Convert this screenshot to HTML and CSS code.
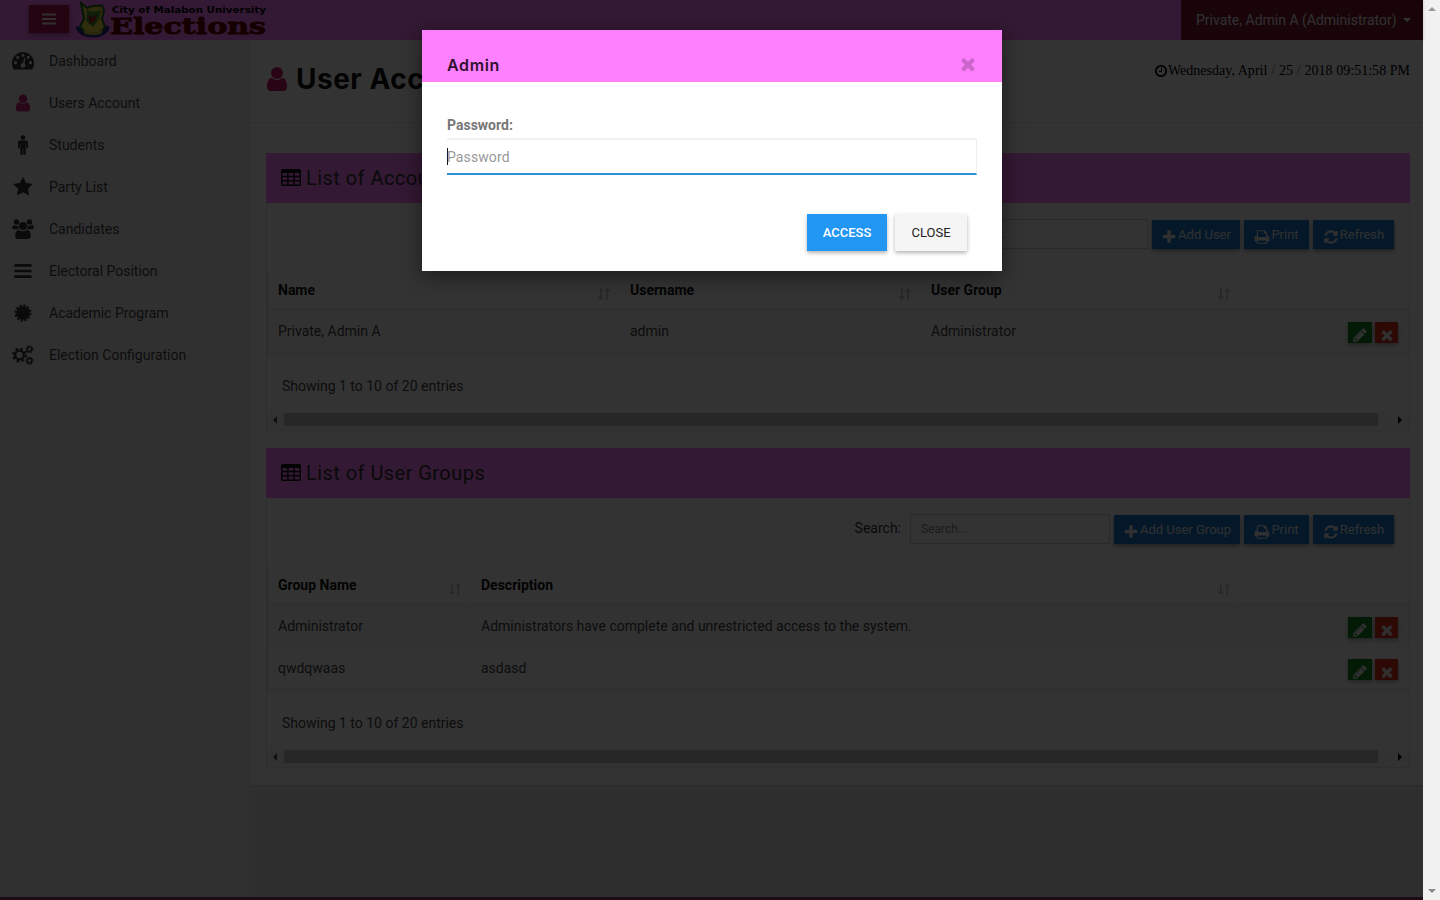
FILE: index.html
```
<!DOCTYPE html>
<html lang="en">
<head>
<meta charset="utf-8">
<title>User Accounts</title>
<link rel="stylesheet" href="styles.css">
</head>
<body>
<svg class="defs" aria-hidden="true">
  <symbol id="bars" viewBox="0 0 1792 1792"><path d="M128 270h1536v240H128zM128 776h1536v240H128zM128 1282h1536v240H128z"/></symbol>
  <symbol id="user" viewBox="0 0 1792 1792"><path d="M1536 1399q0 109-62.500 187t-150.500 78h-854q-88 0-150.500-78t-62.500-187q0-85 8.500-160.500t31.500-152 58.500-131 94-89 134.500-34.500q131 128 313 128t313-128q76 0 134.500 34.500t94 89 58.500 131 31.500 152 8.500 160.500zm-256-887q0 159-112.500 271.500t-271.500 112.500-271.500-112.500-112.500-271.500 112.500-271.500 271.500-112.500 271.500 112.500 112.500 271.500z"/></symbol>
  <symbol id="star" viewBox="0 0 1792 1792"><path d="M1728 647q0 22-26 48l-363 354 86 500q1 7 1 20 0 21-10.500 35.500t-30.500 14.500q-19 0-40-12l-449-236-449 236q-22 12-40 12-21 0-31.500-14.500t-10.500-35.500q0-6 2-20l86-500-364-354q-25-27-25-48 0-37 56-46l502-73 225-455q19-41 49-41t49 41l225 455 502 73q56 9 56 46z"/></symbol>
  <symbol id="plus" viewBox="0 0 1792 1792"><path d="M1600 736v192q0 40-28 68t-68 28h-416v416q0 40-28 68t-68 28h-192q-40 0-68-28t-28-68v-416h-416q-40 0-68-28t-28-68v-192q0-40 28-68t68-28h416v-416q0-40 28-68t68-28h192q40 0 68 28t28 68v416h416q40 0 68 28t28 68z"/></symbol>
  <symbol id="times" viewBox="0 0 1792 1792"><path d="M1490 1322q0 40-28 68l-136 136q-28 28-68 28t-68-28l-294-294-294 294q-28 28-68 28t-68-28l-136-136q-28-28-28-68t28-68l294-294-294-294q-28-28-28-68t28-68l136-136q28-28 68-28t68 28l294 294 294-294q28-28 68-28t68 28l136 136q28 28 28 68t-28 68l-294 294 294 294q28 28 28 68z"/></symbol>
  <symbol id="pencil" viewBox="0 0 1792 1792"><path d="M491 1536l91-91-235-235-91 91v107h128v128h107zm523-928q0-22-22-22-10 0-17 7l-542 542q-7 7-7 17 0 22 22 22 10 0 17-7l542-542q7-7 7-17zm-54-192l416 416-832 832h-416v-416zm683 96q0 53-37 90l-166 166-416-416 166-165q36-38 90-38 53 0 91 38l235 234q37 39 37 91z"/></symbol>
  <symbol id="refresh" viewBox="0 0 1792 1792"><path d="M1639 1056q0 5-1 7-64 268-268 434.500t-478 166.500q-146 0-282.500-55t-243.500-157l-129 129q-19 19-45 19t-45-19-19-45v-448q0-26 19-45t45-19h448q26 0 45 19t19 45-19 45l-137 137q71 66 161 102t187 36q134 0 250-65t186-179q11-17 53-117 8-23 30-23h192q13 0 22.500 9.500t9.500 22.500zm25-800v448q0 26-19 45t-45 19h-448q-26 0-45-19t-19-45 19-45l138-138q-148-137-349-137-134 0-250 65t-186 179q-11 17-53 117-8 23-30 23h-199q-13 0-22.500-9.500t-9.500-22.500v-7q65-268 270-434.500t480-166.500q146 0 284 55.500t245 156.500l130-129q19-19 45-19t45 19 19 45z"/></symbol>
  <symbol id="print" viewBox="0 0 1792 1792"><path d="M448 1536h896v-256h-896v256zm0-640h896v-384h-160q-40 0-68-28t-28-68v-160h-640v640zm1152 64q0-26-19-45t-45-19-45 19-19 45 19 45 45 19 45-19 19-45zm128 0v416q0 13-9.500 22.500t-22.500 9.500h-224v160q0 40-28 68t-68 28h-960q-40 0-68-28t-28-68v-160h-224q-13 0-22.500-9.500t-9.500-22.500v-416q0-79 56.500-135.500t135.500-56.500h64v-544q0-40 28-68t68-28h672q40 0 88 20t76 48l152 152q28 28 48 76t20 88v256h64q79 0 135.500 56.500t56.500 135.500z"/></symbol>
  <symbol id="clock" viewBox="0 0 1792 1792"><path d="M1024 544v448q0 14-9 23t-23 9h-320q-14 0-23-9t-9-23v-64q0-14 9-23t23-9h224v-352q0-14 9-23t23-9h64q14 0 23 9t9 23zm416 352q0-148-73-273t-198-198-273-73-273 73-198 198-73 273 73 273 198 198 273 73 273-73 198-198 73-273zm224 0q0 209-103 385.500t-279.500 279.500-385.500 103-385.500-103-279.500-279.500-103-385.500 103-385.500 279.500-279.500 385.500-103 385.500 103 279.500 279.500 103 385.500z"/></symbol>
  <symbol id="table" viewBox="0 0 20 18"><path fill-rule="evenodd" d="M1.500 0h17Q20 0 20 1.500v14q0 1.500-1.500 1.500h-17Q0 17 0 15.500v-14Q0 0 1.500 0zM1.500 4v2.800h4.700V4zm6.100 0v2.800h4.800V4zm6.200 0v2.800h4.700V4zM1.500 8.300V11h4.700V8.300zm6.100 0V11h4.800V8.300zm6.200 0V11h4.700V8.300zM1.500 12.500v3h4.700v-3zm6.100 0v3h4.800v-3zm6.200 0v3h4.700v-3z"/></symbol>
  <symbol id="dashboard" viewBox="0 0 20 18"><path fill-rule="evenodd" d="M10 1a10 10 0 0 1 8.600 15.200q-.3.500-.9.500H2.300q-.6 0-.9-.5A10 10 0 0 1 10 1zM4.600 10.500a1.400 1.400 0 1 0-2.800 0 1.400 1.400 0 0 0 2.800 0zm2-4.800a1.400 1.400 0 1 0-2.800 0 1.400 1.400 0 0 0 2.800 0zm4.800-2a1.400 1.400 0 1 0-2.800 0 1.400 1.400 0 0 0 2.800 0zm4.800 2a1.400 1.400 0 1 0-2.800 0 1.400 1.400 0 0 0 2.800 0zm2 4.800a1.400 1.400 0 1 0-2.800 0 1.400 1.400 0 0 0 2.800 0zM12.300 6.500l-1.200-.3-1.100 4.600a2.200 2.200 0 1 0 1.300.4z"/></symbol>
  <symbol id="male" viewBox="0 0 14 20"><circle cx="7" cy="2.600" r="2.400"/><path d="M4 5.500h6q2 0 2 2v5q0 1-.9 1t-.9-1V8.700h-.5v10q0 1.200-1.200 1.200-1.200 0-1.200-1.200v-5h-.6v5q0 1.200-1.200 1.200-1.200 0-1.200-1.200v-10h-.5v3.800q0 1-.9 1t-.9-1v-5q0-2 2-2z"/></symbol>
  <symbol id="group" viewBox="0 0 22 20"><circle cx="4.500" cy="3" r="2.700"/><circle cx="17.500" cy="3" r="2.700"/><circle cx="11" cy="7" r="4"/><path d="M2 6q2.500 1.400 4.500.6Q6 9 7.200 10.300H3Q.2 10.300.2 8.400.2 6 2 6zM20 6q-2.500 1.400-4.500.6.5 2.400-.7 3.700H19q2.800 0 2.800-1.900Q21.800 6 20 6zM7 11q4 2.600 8 0 3.800 0 3.800 6 0 2.900-2.800 2.900H6q-2.800 0-2.800-2.900Q3.200 11 7 11z"/></symbol>
  <symbol id="certificate" viewBox="0 0 20 20"><circle cx="10" cy="10" r="7.600"/><circle cx="10" cy="10" r="8.300" fill="none" stroke="currentColor" stroke-width="2.400" stroke-dasharray="2.550 1.795"/></symbol>
  <symbol id="cogs" viewBox="0 0 22 20"><g fill="none" stroke="currentColor"><circle cx="7.500" cy="10" r="4.300" stroke-width="2.300"/><circle cx="7.500" cy="10" r="6.300" stroke-width="2.200" stroke-dasharray="2.600 2.350"/><circle cx="17.500" cy="4.200" r="2.200" stroke-width="1.500"/><circle cx="17.500" cy="4.200" r="3.500" stroke-width="1.200" stroke-dasharray="1.500 1.250"/><circle cx="17.500" cy="15.800" r="2.200" stroke-width="1.500"/><circle cx="17.500" cy="15.800" r="3.500" stroke-width="1.200" stroke-dasharray="1.500 1.250"/></g></symbol>
  <symbol id="sort" viewBox="0 0 14 12"><path d="M3 0h1.500v8.500H7L3.700 12 .5 8.500H3zM9.500 12H11V3.500h2.500L10.200 0 7 3.500h2.500z"/></symbol>
</svg>
<div class="screen">
  <div class="app">
    <header class="topbar">
      <button class="menu-btn"><svg class="i16"><use href="#bars"/></svg></button>
      <svg class="logo" viewBox="0 0 194 38">
        <path d="M1 25q14 7 31-.500l3 2q-4 10-17 10T1 28z" fill="#26238f"/>
        <path d="M6 2l6 5 6-2 9-.500 2 5-2 8 3 9-6 6H11l-6-7 4-8z" fill="#e6dc3c" stroke="#176b20" stroke-width="2"/>
        <path d="M12 9l7 2 7-2-2 9-6 8-7-6z" fill="#579c35"/>
        <path d="M13 14l5 2 4-2-2 6-5 3z" fill="#9a281e"/>
        <path d="M10 22l6 5 10-4 1 4-6 3h-9z" fill="#f0e040"/>
        <path d="M8 29q10 5 20 0l-2 4q-8 2-16 0z" fill="#d9c544"/>
        <text class="logo-top" x="37" y="12" textLength="154" lengthAdjust="spacingAndGlyphs">City of Malabon University</text>
        <text class="logo-main" x="35" y="32.500" textLength="156" lengthAdjust="spacingAndGlyphs">Elections</text>
      </svg>
      <div class="account">Private, Admin A (Administrator)<span class="caret"></span></div>
    </header>
    <div class="body">
      <nav class="sidebar">
        <a class="item"><svg class="mi"><use href="#dashboard"/></svg>Dashboard</a>
        <a class="item active"><svg class="mi"><use href="#user"/></svg>Users Account</a>
        <a class="item"><svg class="mi"><use href="#male"/></svg>Students</a>
        <a class="item"><svg class="mi"><use href="#star"/></svg>Party List</a>
        <a class="item"><svg class="mi"><use href="#group"/></svg>Candidates</a>
        <a class="item"><svg class="mi"><use href="#bars"/></svg>Electoral Position</a>
        <a class="item"><svg class="mi small"><use href="#certificate"/></svg>Academic Program</a>
        <a class="item"><svg class="mi"><use href="#cogs"/></svg>Election Configuration</a>
      </nav>
      <main class="content">
        <div class="page">
          <div class="page-head">
            <h1><svg class="head-icon"><use href="#user"/></svg>User Accounts</h1>
            <div class="clock"><svg class="i14"><use href="#clock"/></svg><span>Wednesday, April</span><span class="slash">/</span><span>25</span><span class="slash">/</span><span>2018 09:51:58 PM</span></div>
          </div>
          <section class="card">
            <h2><svg class="tbl"><use href="#table"/></svg>List of Accounts</h2>
            <div class="tools">
              <label>Search:</label><input placeholder="Search...">
              <button class="btn add-user"><svg class="i16"><use href="#plus"/></svg>Add User</button>
              <button class="btn print"><svg class="i16"><use href="#print"/></svg>Print</button>
              <button class="btn refresh"><svg class="i16"><use href="#refresh"/></svg>Refresh</button>
            </div>
            <div class="grid users">
              <div class="row th"><div>Name<svg class="sort"><use href="#sort"/></svg></div><div>Username<svg class="sort"><use href="#sort"/></svg></div><div>User Group<svg class="sort"><use href="#sort"/></svg></div><div></div></div>
              <div class="row odd"><div>Private, Admin A</div><div>admin</div><div>Administrator</div><div class="acts"><b class="ed"><svg class="i16"><use href="#pencil"/></svg></b><b class="del"><svg class="i16"><use href="#times"/></svg></b></div></div>
            </div>
            <div class="info">Showing 1 to 10 of 20 entries</div>
            <div class="hscroll"><i class="l"></i><span></span><i class="r"></i></div>
          </section>
          <section class="card">
            <h2><svg class="tbl"><use href="#table"/></svg>List of User Groups</h2>
            <div class="tools">
              <label>Search:</label><input placeholder="Search...">
              <button class="btn add-group"><svg class="i16"><use href="#plus"/></svg>Add User Group</button>
              <button class="btn print"><svg class="i16"><use href="#print"/></svg>Print</button>
              <button class="btn refresh"><svg class="i16"><use href="#refresh"/></svg>Refresh</button>
            </div>
            <div class="grid groups">
              <div class="row th"><div>Group Name<svg class="sort"><use href="#sort"/></svg></div><div>Description<svg class="sort"><use href="#sort"/></svg></div><div></div></div>
              <div class="row odd"><div>Administrator</div><div>Administrators have complete and unrestricted access to the system.</div><div class="acts"><b class="ed"><svg class="i16"><use href="#pencil"/></svg></b><b class="del"><svg class="i16"><use href="#times"/></svg></b></div></div>
              <div class="row"><div>qwdqwaas</div><div>asdasd</div><div class="acts"><b class="ed"><svg class="i16"><use href="#pencil"/></svg></b><b class="del"><svg class="i16"><use href="#times"/></svg></b></div></div>
            </div>
            <div class="info tall">Showing 1 to 10 of 20 entries</div>
            <div class="hscroll"><i class="l"></i><span></span><i class="r"></i></div>
          </section>
        </div>
      </main>
    </div>
    <footer class="foot"></footer>
    <div class="overlay">
      <div class="modal">
        <div class="modal-head"><h4>Admin</h4><svg class="close"><use href="#times"/></svg></div>
        <div class="modal-body">
          <label>Password:</label>
          <div class="field"><span class="cursor"></span>Password</div>
        </div>
        <div class="modal-foot"><button class="access">ACCESS</button><button class="cancel">CLOSE</button></div>
      </div>
    </div>
  </div>
  <div class="vscroll"><i class="up"></i><i class="down"></i></div>
</div>
</body>
</html>
```

FILE: styles.css
```
* { box-sizing: border-box; }
body { margin: 0; font: 14px/20px Roboto, sans-serif; color: #555; overflow: hidden; }
.defs { position: absolute; width: 0; height: 0; }
svg { fill: currentColor; flex: none; }
button, input { font-family: inherit; letter-spacing: inherit; border: 0; border-radius: 0; }
h1, h2, h4 { margin: 0; }
.screen { display: flex; height: 900px; }
.app { position: relative; width: 1423px; display: flex; flex-direction: column; background: #e7e7e7; }
.i16 { width: 16px; height: 16px; }
.i14 { width: 14px; height: 14px; }

.topbar { height: 40px; background: #ff7dff; display: flex; padding-left: 29px; align-items: flex-start; box-shadow: 0 1px 3px #0003; }
.menu-btn { width: 40px; height: 28px; margin-top: 5px; padding: 0; background: #b41450; color: #eee; display: flex; align-items: center; justify-content: center; box-shadow: 0 2px 5px #0006; }
.logo { width: 194px; height: 38px; margin: 1px 0 0 6px; }
.logo-top { font: bold 9.500px "DejaVu Sans", sans-serif; fill: #000; }
.logo-main { font: bold 22px "DejaVu Serif", serif; fill: #6b0000; stroke: #6b0000; stroke-width: .8px; }
.account { margin-left: auto; width: 242px; height: 40px; padding-left: 15px; background: #78142d; color: #f0f0f0; display: flex; align-items: center; white-space: nowrap; }
.caret { border: 4px solid transparent; border-top-color: #fff; border-bottom: 0; margin-left: 6px; }

.body { flex: 1; display: flex; }
.sidebar { width: 250px; background: #f0f0f0; border-right: 1px solid #e4e4e4; }
.item { display: flex; align-items: center; height: 42px; padding-left: 12px; color: #444; }
.mi { width: 22px; height: 20px; margin-right: 15px; color: #333; }
.mi.small { height: 18px; }
.active .mi { color: #c82878; }
.content { flex: 1; }
.page { height: 746px; background: #fff; padding: 0 13px 0 16px; border-bottom: 1px solid #d8d8d8; }
.page-head { height: 83px; margin: 0 -13px 30px -16px; padding: 24px 13px 0 16px; border-bottom: 1px solid #e4e4e4; display: flex; justify-content: space-between; align-items: flex-start; }
h1 { font: 700 28px/30px Inter, sans-serif; color: #111; display: flex; align-items: center; letter-spacing: .5px; }
.head-icon { width: 28px; height: 28px; margin: 0 5px 0 -3px; color: #c81464; }
.clock { font: 14px/14px "Liberation Serif", serif; letter-spacing: .03px; color: #000; display: flex; }
.clock .slash { width: 11.500px; text-align: center; color: #777; }

.card { border: 1px solid #e6e6e6; border-top: 0; }
.card + .card { margin-top: 17px; }
h2 { height: 50px; margin: 0 -1px; padding-left: 15px; font: 400 20px/50px Roboto, sans-serif; letter-spacing: .45px; color: #333; background: #ff7dff; display: flex; align-items: center; }
.tbl { width: 20px; height: 18px; margin-right: 5px; color: #111; }
.tools { height: 69px; padding: 16px 15px 0 0; display: flex; gap: 4px; justify-content: flex-end; align-items: flex-start; }
.tools label { line-height: 29px; color: #333; margin-right: 5px; }
.tools input { width: 200px; height: 30px; padding: 0 10px; font-size: 12px; border: 1px solid #ccc; background: #fff; }
.tools input::placeholder { color: #888; }
.btn { height: 29px; margin-top: 1px; padding: 0; font-size: 13px; color: #eee; background: #1478cd; display: flex; align-items: center; justify-content: center; gap: 1px; box-shadow: 0 2px 4px #0006; white-space: nowrap; }
.btn svg { margin-top: 4px; }
.add-user { width: 88px; }
.add-group { width: 126px; }
.print { width: 65px; }
.refresh { width: 81px; }

.grid { border: 1px solid #e0e0e0; border-width: 0 0 1px 1px; color: #444; }
.row { display: grid; height: 42px; align-items: stretch; }
.users .row { grid-template-columns: 352px 301px 314px 1fr; }
.groups .row { grid-template-columns: 203px 768px 1fr; }
.row > div { padding-left: 10px; line-height: 42px; position: relative; border-right: 1px solid #ededed; }
.row > div:last-child { border: 0; }
.row.th { height: 38px; border-bottom: 1px solid #e4e4e4; font-weight: 700; color: #111; }
.row.th > div { line-height: 36px; border: 0; display: flex; justify-content: space-between; padding-right: 9px; }
.users .th > div:nth-child(3) { padding-right: 4px; }
.groups .th > div:nth-child(2) { padding-right: 8px; }
.odd { background: #f9f9f9; }
.users .odd { height: 43px; }
.sort { width: 14px; height: 12px; margin-top: 16px; color: #c4c4c4; }
.row > .acts { display: flex; gap: 3px; justify-content: flex-end; padding: 12px 11px 0 0; }
.acts b { width: 24px; height: 21px; display: flex; align-items: flex-end; justify-content: center; color: #eee; box-shadow: 0 2px 4px #0005; }
.acts .ed { background: #0f871e; }
.acts .del { width: 23px; background: #e12d1e; }
.info { height: 58px; padding-left: 15px; line-height: 65px; color: #444; }
.info.tall { height: 59px; line-height: 67px; }
.hscroll { height: 18px; padding: 1px 4px 4px; display: flex; align-items: center; background: #fafafa; }
.hscroll span { height: 13px; width: 1094px; margin: 0 20px 0 7px; background: #c1c1c1; }
.hscroll i { border: 4px solid transparent; }
.hscroll .l { border-right-color: #555; border-left: 0; margin-left: 2px; }
.hscroll .r { border-left-color: #000; border-right: 0; }
.foot { height: 3px; background: #963c69; }

.overlay { position: absolute; inset: 0; background: rgba(0, 0, 0, .8); padding-top: 30px; }
.modal { width: 580px; height: 241px; margin-left: 422px; background: #fff; box-shadow: 0 5px 20px rgba(0, 0, 0, .45); }
.modal-head { height: 52px; padding: 25px 24px 0 25px; background: #ff80ff; display: flex; justify-content: space-between; }
.modal-head h4 { font: 600 16px/20px Inter, sans-serif; color: #301030; letter-spacing: .65px; }
.close { width: 20px; height: 20px; color: #cc66cc; margin-top: -1px; }
.modal-body { padding: 33px 25px 0; }
.modal-body label { display: block; font-weight: 700; color: #777; }
.field { height: 37px; margin-top: 3px; border-top: 2px solid #f0f0f0; border-right: 1px solid #eee; border-bottom: 2px solid #318fd3; color: #999; display: flex; align-items: center; letter-spacing: .1px; }
.cursor { width: 1px; height: 17px; background: #111; margin-right: -1px; }
.modal-foot { display: flex; justify-content: flex-end; gap: 8px; padding: 39px 35px 0; }
.modal-foot button { height: 37px; padding: 0; font-size: 13px; box-shadow: 0 2px 4px rgba(0, 0, 0, .3); }
.access { width: 80px; background: #2196f3; color: #fff; font-weight: 500; }
.cancel { width: 72px; background: #f5f5f5; color: #222; }

.vscroll { width: 17px; background: #f1f1f1; display: flex; flex-direction: column; justify-content: space-between; align-items: center; padding: 7px 0; }
.vscroll i { border: 4px solid transparent; }
.vscroll .up { border-bottom-color: #999; border-top: 0; }
.vscroll .down { border-top-color: #888; border-bottom: 0; }
```
